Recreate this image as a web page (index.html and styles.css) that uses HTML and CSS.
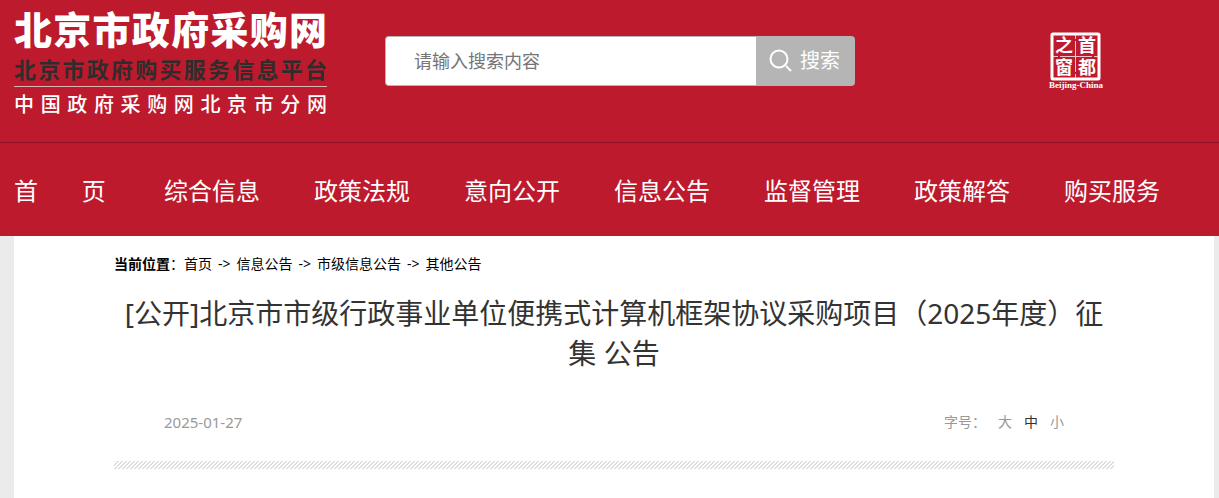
FILE: index.html
```html
<!DOCTYPE html>
<html lang="zh-CN">
<head>
<meta charset="utf-8">
<title>北京市政府采购网</title>
<link rel="stylesheet" href="styles.css">
</head>
<body>
<header class="header">
  <div class="banner">
    <a class="logo" href="#">
      <span class="logo-name">北京市政府采购网</span>
      <span class="logo-platform">北京市政府购买服务信息平台</span>
      <span class="logo-branch">中国政府采购网北京市分网</span>
    </a>
    <form class="search">
      <input class="search-input" type="text" placeholder="请输入搜索内容" aria-label="搜索内容">
      <button class="search-button" type="button">
        <svg class="search-icon" viewBox="0 0 24 24" aria-hidden="true"><circle cx="10" cy="10" r="8.500"/><path d="M17 17l5 5"/></svg>
        搜索
      </button>
    </form>
    <a class="emblem" href="#" aria-label="首都之窗">
      <svg class="emblem-art" viewBox="0 0 56 60">
        <rect class="emblem-frame" x="4" y="3" width="47" height="45" rx="1"/>
        <path class="emblem-cross" d="M27.500 4v43M5 25.500h45"/>
        <path class="emblem-gap" d="M26 9h3M26 42h3M11 24v3M45 24v3"/>
        <text class="emblem-char" x="16" y="21">之</text>
        <text class="emblem-char" x="39" y="21">首</text>
        <text class="emblem-char" x="16" y="43">窗</text>
        <text class="emblem-char" x="39" y="43">都</text>
        <text class="emblem-caption" x="28" y="57">Beijing-China</text>
      </svg>
    </a>
  </div>
  <nav class="nav">
    <a class="nav-link" href="#">首&nbsp;&nbsp;&nbsp;&nbsp;&nbsp;&nbsp;&nbsp;页</a>
    <a class="nav-link" href="#">综合信息</a>
    <a class="nav-link" href="#">政策法规</a>
    <a class="nav-link" href="#">意向公开</a>
    <a class="nav-link" href="#">信息公告</a>
    <a class="nav-link" href="#">监督管理</a>
    <a class="nav-link" href="#">政策解答</a>
    <a class="nav-link" href="#">购买服务</a>
  </nav>
</header>
<div class="page">
  <main class="content">
    <div class="crumbs">
      <span><b>当前位置</b>：<a href="#">首页</a></span>
      <span>-&gt;</span>
      <a href="#">信息公告</a>
      <span>-&gt;</span>
      <a href="#">市级信息公告</a>
      <span>-&gt;</span>
      <a href="#">其他公告</a>
    </div>
    <h1 class="title">[公开]北京市市级行政事业单位便携式计算机框架协议采购项目（2025年度）征集 公告</h1>
    <div class="meta">
      <time class="date">2025-01-27</time>
      <div class="sizes">
        <span class="sizes-label">字号：</span>
        <button class="size" type="button">大</button>
        <button class="size size-active" type="button">中</button>
        <button class="size" type="button">小</button>
      </div>
    </div>
    <div class="stripes"></div>
  </main>
</div>
</body>
</html>
```
FILE: styles.css
```css
* { box-sizing: border-box; }
body {
  margin: 0;
  background: #ebebeb;
  color: #000;
  font: 14px/20px "Noto Sans", "Noto Sans CJK SC", sans-serif;
}
a { color: inherit; text-decoration: none; }
button, input { font: inherit; }

.header { background: #bd1a2d; color: #fff; }
.banner {
  display: flex;
  align-items: flex-start;
  padding: 6px 115px 20px 14px;
  border-bottom: 1px solid #8c1322;
}
.logo { display: flex; flex-direction: column; width: 313px; margin-right: 58px; }
.logo span { display: block; text-align-last: justify; white-space: nowrap; }
.logo-name { font-size: 38px; line-height: 46px; font-weight: 900; }
.logo-platform {
  border-bottom: 1px solid #d9b5b8;
  color: #302c2c;
  font-size: 22px;
  line-height: 34px;
  font-weight: 700;
}
.logo-branch { font-size: 20px; line-height: 35px; font-weight: 500; }

.search { display: flex; width: 470px; height: 50px; margin-top: 30px; }
.search-input {
  flex: 1;
  min-width: 0;
  padding: 0 28px;
  border: 1px solid #b5b5b5;
  border-right: 0;
  border-radius: 4px 0 0 4px;
  background: #fff;
  font-size: 18px;
}
.search-input::placeholder { color: #757575; }
.search-button {
  display: flex;
  align-items: center;
  gap: 7px;
  width: 99px;
  padding: 0 13px;
  border: 0;
  border-radius: 0 4px 4px 0;
  background: #b5b5b5;
  color: #fff;
  font-size: 20px;
}
.search-icon { flex: none; width: 24px; height: 24px; fill: none; stroke: #fff; stroke-width: 2; }

.emblem { margin: 25px 0 0 auto; }
.emblem-art { display: block; width: 56px; height: 60px; }
.emblem-frame { fill: none; stroke: #fff; stroke-width: 3; }
.emblem-cross { fill: none; stroke: #f0c5ca; stroke-width: 1; }
.emblem-gap { stroke: #bd1a2d; stroke-width: 2; }
.emblem-char { fill: #fff; font-size: 18px; font-weight: 700; text-anchor: middle; }
.emblem-caption { fill: #fff; font: 700 9px "Liberation Serif", serif; text-anchor: middle; }

.nav {
  display: grid;
  grid-template-columns: repeat(8, 1fr);
  padding: 33px 5px 30px 14px;
  font-size: 24px;
  line-height: 30px;
}
.nav-link { white-space: nowrap; }

.page { padding: 0 5px 0 14px; }
.content { min-height: 262px; padding: 18px 100px 29px; background: #fff; }
.crumbs { display: flex; gap: 6px; }
.title {
  margin: 19px 0 0;
  color: #333;
  font-size: 28px;
  line-height: 40px;
  font-weight: 400;
  text-align: center;
}
.meta {
  display: flex;
  justify-content: space-between;
  padding: 39px 50px 29px;
  color: #999;
}
.date { font-size: 15px; }
.sizes { display: flex; gap: 12px; }
.size { padding: 0; border: 0; background: none; color: #999; }
.size-active { color: #333; }
.stripes {
  height: 8px;
  background: linear-gradient(135deg, #ddd 13%, #fff 13%, #fff 38%, #ddd 38%, #ddd 63%, #fff 63%, #fff 88%, #ddd 88%) 0 0 / 4px 4px;
}
```
